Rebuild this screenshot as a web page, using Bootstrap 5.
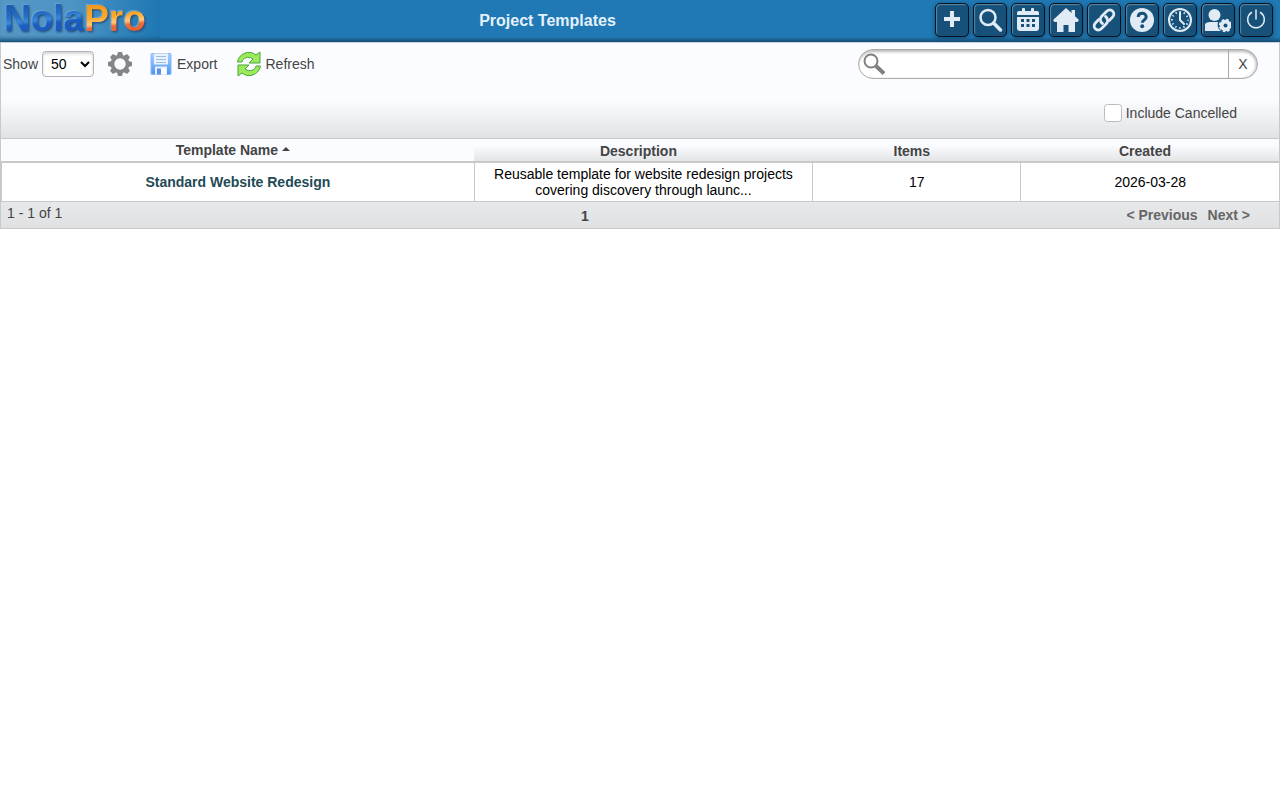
<!DOCTYPE html>
<html lang="en">
<head>
<meta charset="utf-8">
<meta name="viewport" content="width=device-width, initial-scale=1">
<title>Project Templates</title>
<link href="https://cdn.jsdelivr.net/npm/bootstrap@5.3.0/dist/css/bootstrap.min.css" rel="stylesheet">
<style>
body { font-family: "Liberation Sans", Arial, sans-serif; font-size: 14px; line-height: 16px; color: #444; background: #fff; }
.topbar { height: 42px; padding-right: 7px; background: linear-gradient(#2079b4 0, #2079b4 37px, #1a527c 41px, #1a527c 100%); }
.brand-area { width: 160px; height: 41px; padding: 0 0 0 4px; background: linear-gradient(90deg, #5697c6, #4d94c5 45%, #2079b4 97%); box-shadow: inset 0 -5px 4px -3px #1a527c; }
.wordmark { font-size: 37px; line-height: 38px; font-weight: 700; text-decoration: none; filter: drop-shadow(1px 1px 1px #1c3f68) drop-shadow(-1px -1px 0 #6aa8d8); }
.wordmark span { background-clip: text; -webkit-background-clip: text; color: transparent; }
.blue-part { background-image: linear-gradient(174deg, #1d5db5 20%, #2670c8 42%, #3a8adb 52%, #1b5fc4 60%, #1758bb 90%); }
.orange-part { background-image: linear-gradient(174deg, #f39a1e 20%, #fba92f 45%, #ffc878 58%, #ee6a35 66%, #e8592b 90%); }
.page-title { font-size: 16px; line-height: 20px; font-weight: 700; color: #e4f1fb; margin: 0; }
.tool-strip { padding-top: 3px; }
.tool-btn { width: 34px; height: 34px; padding: 0; border: 1px solid #04121f; border-radius: 5px; background: #175179; box-shadow: inset 1px 1px 1px #5d8bab, 0 1px 4px #10466c; color: #e0ebf6; }
.tool-btn svg { width: 26px; height: 26px; display: block; }
.grid-panel { border: 1px solid #c8c9cb; border-top-color: #c2d2e2; }
.grid-tools { height: 96px; background: linear-gradient(#fbfcff 60%, #e1e2e4); border-bottom: 1px solid #c8c9cb; padding: 6px 21px 0 2px; }
.count-select { width: 52px; height: 26px; padding: 0 4px; border: 1px solid #b4b5b8; border-radius: 4px; background: #fff; box-shadow: inset 0 2px 3px #d5d5d5; color: #000; font-size: 14px; }
.plain-btn { border: 0; padding: 0; background: none; color: #444; }
.gear-btn { margin: 0 18px 0 14px; }
.tool-label { padding-left: 5px; }
.refresh-btn { margin-left: 18px; }
.search-pill { width: 400px; height: 30px; border: 1px solid #aaa; border-radius: 15px; background: #fff; box-shadow: inset 0 3px 3px -1px #bbb, inset -2px 0 3px -1px #bbb; overflow: hidden; }
.search-pill input { border: 0; outline: 0; background: transparent; min-width: 0; }
.clear-btn { width: 29px; padding: 0; border: 0; border-left: 1px solid #aaa; background: transparent; color: #444; }
.cancel-row { padding: 25px 21px 0 0; }
.cancel-box { width: 18px; height: 18px; margin: 0; border-color: #bbb; border-radius: 3px; }
.grid-table { table-layout: fixed; width: 100%; text-align: center; }
.grid-table th { height: 23px; padding: 1px 10px 0 0; border-bottom: 2px solid #c8c9cb; background: linear-gradient(#fbfcff 30%, #e3e4e6); line-height: 20px; }
.grid-table th.sorted { background: #fbfcff; padding: 0 10px 1px 0; }
.grid-table td { height: 39px; padding: 3px 16px; color: #000; border-left: 1px solid #c8c9cb; }
.grid-table a { color: #1f4a55; }
.w-name { width: 37%; } .w-desc { width: 26.5%; } .w-items { width: 16.3%; }
.grid-foot { height: 27px; border-top: 1px solid #c8c9cb; background: linear-gradient(#e7e8ea, #dfe1e3); padding: 0 29px 0 6px; }
.foot-count { width: 35%; }
.foot-page { width: 23%; padding-top: 2px; }
.foot-nav { gap: 10px; }
.grid-foot button { font-weight: 700; color: #666; }
</style>
</head>
<body>
<header class="topbar d-flex">
  <div class="brand-area flex-shrink-0"><a href="#" class="wordmark d-inline-block"><span class="blue-part">Nola</span><span class="orange-part">Pro</span></a></div>
  <div class="flex-grow-1 d-flex justify-content-center align-items-center"><h1 class="page-title">Project Templates</h1></div>
  <nav class="tool-strip d-flex gap-1 align-items-start" aria-label="Main tools">
    <button class="tool-btn d-flex align-items-center justify-content-center" aria-label="Add"><svg viewBox="0 0 26 26"><path d="M13 4v16M5 12h16" stroke="currentColor" stroke-width="4"/></svg></button>
    <button class="tool-btn d-flex align-items-center justify-content-center" aria-label="Search"><svg viewBox="0 0 26 26" fill="none" stroke="currentColor"><circle cx="11" cy="10.500" r="7.500" stroke-width="2.500"/><path d="M16.500 16l7 7" stroke-width="3.500" stroke-linecap="round"/></svg></button>
    <button class="tool-btn d-flex align-items-center justify-content-center" aria-label="Calendar"><svg viewBox="0 0 26 26" fill="currentColor"><path fill-rule="evenodd" d="M2 8V6q0-2 2-2h3V2q0-1 1-1h1q1 0 1 1v2h6V2q0-1 1-1h1q1 0 1 1v2h3q2 0 2 2v2zM2 10h22v11q0 3-3 3H5q-3 0-3-3zm4 2v3h3v-3zm5.500 0v3h3v-3zm5.500 0v3h3v-3zm-11 5v3h3v-3zm5.500 0v3h3v-3zm5.500 0v3h3v-3z"/></svg></button>
    <button class="tool-btn d-flex align-items-center justify-content-center" aria-label="Home"><svg viewBox="0 0 26 26" fill="currentColor"><path d="M13 1l5.500 5V3H22v6.300l4 3.700-1.500 2H22v10h-6.500v-7h-5v7H4V15H1.500L0 13z"/></svg></button>
    <button class="tool-btn d-flex align-items-center justify-content-center" aria-label="Links"><svg viewBox="0 0 26 26" fill="none" stroke="currentColor" stroke-width="2.800" stroke-linecap="round"><path d="M11.500 16.500c-2.800-2-2.800-5.200-.6-7.400l4.600-4.600c4.500-4.200 10 1.300 5.900 5.800l-3.200 3.200"/><path d="M14.500 9.500c2.800 2 2.800 5.200.6 7.400l-4.600 4.600c-4.500 4.200-10-1.300-5.900-5.800l3.200-3.200"/></svg></button>
    <button class="tool-btn d-flex align-items-center justify-content-center" aria-label="Help"><svg viewBox="0 0 26 26"><circle cx="13" cy="13" r="12" fill="currentColor"/><path d="M9.200 10c.3-5 8-4.700 8 0 0 3-3.900 2.900-3.900 5.700" fill="none" stroke="#175179" stroke-width="3"/><circle cx="13.200" cy="19.300" r="2" fill="#175179"/></svg></button>
    <button class="tool-btn d-flex align-items-center justify-content-center" aria-label="Time clock"><svg viewBox="0 0 26 26" fill="none" stroke="currentColor"><circle cx="13" cy="13" r="11" stroke-width="2"/><circle cx="13" cy="13" r="8" stroke-width="2" stroke-dasharray="1.300 2.889" stroke-dashoffset=".65"/><path d="M13 5.500V13l4 4" stroke-width="2" stroke-linecap="round"/></svg></button>
    <button class="tool-btn d-flex align-items-center justify-content-center" aria-label="User settings"><svg viewBox="0 0 26 26" fill="currentColor"><circle cx="9.500" cy="8" r="6"/><path d="M-1 24v-3q0-6 6-6h8q-1.500 6 3 9z"/><circle cx="20.500" cy="18.500" r="5.700" stroke="currentColor" stroke-width="2" stroke-dasharray="2.600 1.876"/><circle cx="20.500" cy="18.500" r="5"/><circle cx="20.500" cy="18.500" r="2" fill="#175179"/></svg></button>
    <button class="tool-btn d-flex align-items-center justify-content-center" aria-label="Log out"><svg viewBox="0 0 26 26" fill="none" stroke="currentColor" stroke-width="1.500" stroke-linecap="round"><path d="M13 3v9M8.500 5.500a8.300 8.300 0 1 0 9 0"/></svg></button>
  </nav>
</header>
<main class="grid-panel">
  <div class="grid-tools">
    <div class="d-flex justify-content-between">
      <div class="d-flex align-items-center">
        <label for="count" class="me-1">Show</label>
        <select id="count" class="count-select"><option>50</option><option>100</option></select>
        <button class="plain-btn gear-btn" aria-label="Settings"><svg class="d-block" width="24" height="24" viewBox="0 0 24 24"><g fill="#85868a"><path id="tooth" d="M8.500 5L10 0h4l1.500 5z"/><use href="#tooth" transform="rotate(45 12 12)"/><use href="#tooth" transform="rotate(90 12 12)"/><use href="#tooth" transform="rotate(135 12 12)"/><use href="#tooth" transform="rotate(180 12 12)"/><use href="#tooth" transform="rotate(225 12 12)"/><use href="#tooth" transform="rotate(270 12 12)"/><use href="#tooth" transform="rotate(315 12 12)"/></g><circle cx="12" cy="12" r="7.500" fill="none" stroke="#85868a" stroke-width="3.600"/></svg></button>
        <button class="plain-btn d-flex align-items-center"><svg width="22" height="24" viewBox="1 1 22 23"><defs><linearGradient id="disk" x1="0" y1="0" x2="0" y2="1"><stop stop-color="#a9d0ff"/><stop offset="1" stop-color="#4a96f5"/></linearGradient></defs><rect x="2" y="2" width="20" height="21" rx="1" fill="url(#disk)" stroke="#8ab8f5"/><path d="M5 2h14v11H5z" fill="#e8f2ff"/><path d="M7 5h10M7 8h10M7 11h10" stroke="#a1bddd"/><path d="M6 15h12v8H6z" fill="#e6f0fd"/><path d="M8 17h4v6H8z" fill="#5b93e4"/><path d="M12 17h5v6h-5z" fill="#fff"/></svg><span class="tool-label">Export</span></button>
        <button class="plain-btn refresh-btn d-flex align-items-center gap-1"><svg width="26" height="26" viewBox="0 0 26 26" fill="#9bea5c" stroke="#4ba53a" stroke-linejoin="round"><path id="arrow" d="M1.500 11C3 2 14-1.500 20 4l4-3v11H13l4-4C12 4.500 7 7 6 11z"/><use href="#arrow" transform="rotate(180 13 13)"/></svg><span>Refresh</span></button>
      </div>
      <div class="search-pill d-flex align-items-stretch">
        <svg class="ms-1 align-self-center flex-shrink-0" width="22" height="24" viewBox="0 0 22 24" fill="none" stroke="#808080"><circle cx="8" cy="9" r="6.500" stroke-width="2"/><path d="M13 14l8 7.500" stroke-width="4"/></svg>
        <input type="text" class="flex-grow-1" aria-label="Search templates">
        <button class="clear-btn">X</button>
      </div>
    </div>
    <div class="cancel-row d-flex justify-content-end align-items-center gap-1">
      <input type="checkbox" id="cancelled" class="form-check-input cancel-box"><label for="cancelled">Include Cancelled</label>
    </div>
  </div>
  <table class="grid-table">
    <thead><tr>
      <th class="w-name sorted" aria-sort="ascending">Template Name <svg width="8" height="12" viewBox="0 0 8 12"><path d="M0 6l4-4 4 4z" fill="#444"/></svg></th>
      <th class="w-desc">Description</th><th class="w-items">Items</th><th>Created</th>
    </tr></thead>
    <tbody><tr>
      <td><a href="#" class="fw-bold text-decoration-none">Standard Website Redesign</a></td>
      <td>Reusable template for website redesign projects covering discovery through launc...</td>
      <td>17</td><td>2026-03-28</td>
    </tr></tbody>
  </table>
  <div class="grid-foot d-flex align-items-center">
    <div class="foot-count pb-1">1 - 1 of 1</div>
    <div class="foot-page fw-bold text-center">1</div>
    <div class="foot-nav flex-grow-1 d-flex justify-content-end"><button class="plain-btn">&lt; Previous</button><button class="plain-btn">Next &gt;</button></div>
  </div>
</main>
<script src="https://cdn.jsdelivr.net/npm/bootstrap@5.3.0/dist/js/bootstrap.bundle.min.js"></script>
</body>
</html>
